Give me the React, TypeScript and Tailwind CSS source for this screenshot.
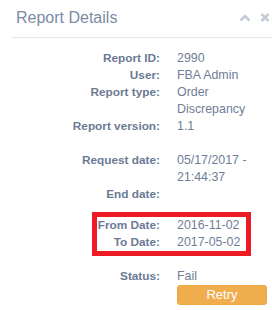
import type { ReactNode } from "react";

type RowProps = {
  label: string;
  children?: ReactNode;
};

function Row({ label, children }: RowProps) {
  return (
    <>
      <div className="text-right text-[11.8px] font-bold leading-[17px] text-[#6b7a94]">{label}</div>
      <div className="text-[12.4px] leading-[17px] text-[#6f7e98]">{children}</div>
    </>
  );
}

export default function App() {
  return (
    <div className="h-[310px] w-[272px] overflow-hidden bg-white font-['Liberation_Sans',Arial,sans-serif]">
      <div className="ml-[12px] flex h-[38px] items-start justify-between border-b border-[#e6e6e6]">
        <h2 className="pl-[4px] pt-[8px] text-[16px] leading-[20px] text-[#7b8ba4]">Report Details</h2>
        <div className="flex items-center gap-[9px] pr-[2px] pt-[13px]">
          <svg width="12" height="8" viewBox="0 0 12 8" aria-hidden>
            <path d="M1.5 6.5 L6 2 L10.5 6.5" fill="none" stroke="#c6ccd5" strokeWidth="2.6" />
          </svg>
          <svg width="10" height="9" viewBox="0 0 10 9" aria-hidden>
            <path d="M1.5 1 L8.5 8 M8.5 1 L1.5 8" fill="none" stroke="#c6ccd5" strokeWidth="2.6" />
          </svg>
        </div>
      </div>

      <div className="pl-[12px] pt-[12px]">
        <div className="grid grid-cols-[148px_90px] gap-x-[17px]">
          <Row label="Report ID:">2990</Row>
          <Row label="User:">FBA Admin</Row>
          <Row label="Report type:">Order Discrepancy</Row>
          <Row label="Report version:">1.1</Row>
        </div>

        <div className="mt-[17px] grid grid-cols-[148px_90px] gap-x-[17px]">
          <Row label="Request date:">05/17/2017 - 21:44:37</Row>
          <Row label="End date:" />
        </div>

        <div className="ml-[80px] mt-[9px] w-[159px] border-[5px] border-[#ed1c24]">
          <div className="grid grid-cols-[63px_69px] gap-x-[17px]">
            <Row label="From Date:">2016-11-02</Row>
            <Row label="To Date:">2017-05-02</Row>
          </div>
        </div>

        <div className="mt-[12px] grid grid-cols-[148px_90px] gap-x-[17px]">
          <Row label="Status:">Fail</Row>
          <button
            type="button"
            className="col-start-2 h-[20px] rounded-[3px] border border-[#eea63f] bg-[#f0ad4e] text-[13px] leading-[18px] text-white"
          >
            Retry
          </button>
        </div>
      </div>
    </div>
  );
}
